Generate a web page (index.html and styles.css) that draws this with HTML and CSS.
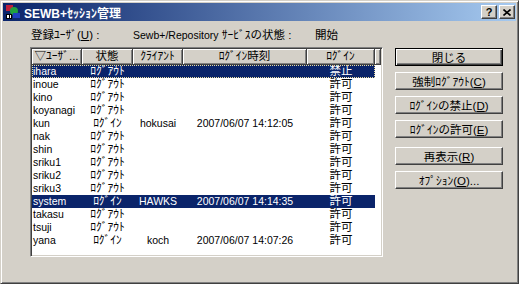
FILE: index.html
```html
<!DOCTYPE html>
<html lang="ja">
<head>
  <meta charset="UTF-8" />
  <title>SEWB+ｾｯｼｮﾝ管理</title>
  <link rel="stylesheet" href="styles.css">
</head>
<body>
  <div class="window">
    <div class="titlebar">
      <svg class="app-icon" viewBox="0 0 16 16" width="16" height="16">
        <rect x="1" y="1" width="7" height="6" fill="#c0203a"/>
        <circle cx="9" cy="7" r="4" fill="#20a040"/>
        <rect x="8" y="9" width="7" height="5" fill="#2040c0"/>
        <rect x="1" y="10" width="6" height="5" fill="#000"/>
        <rect x="2" y="11" width="2" height="3" fill="#fff"/>
        <rect x="5" y="11" width="1" height="3" fill="#fff"/>
      </svg>
      <span class="title">SEWB+ｾｯｼｮﾝ管理</span>
      <div class="caption-btns">
        <span class="cap-btn help">?</span>
        <span class="cap-btn">
          <svg viewBox="0 0 8 7" width="8" height="7">
            <path d="M0.5 0.5 L7.5 6.5 M7.5 0.5 L0.5 6.5" stroke="#000" stroke-width="1.6"/>
          </svg>
        </span>
      </div>
    </div>

    <div class="dialog">
      <div class="status-line">
        <span class="lbl-user">登録ﾕｰｻﾞ(<u>U</u>) :</span>
        <span class="lbl-service"><span class="latin">Sewb+/Repository</span> ｻｰﾋﾞｽの状態 :</span>
        <span>開始</span>
      </div>

      <div class="main">
        <!-- session list -->
        <div class="listview">
          <div class="lv-header">
            <span>▽ﾕｰｻﾞ...</span>
            <span>状態</span>
            <span>ｸﾗｲｱﾝﾄ</span>
            <span>ﾛｸﾞｲﾝ時刻</span>
            <span>ﾛｸﾞｲﾝ</span>
            <span></span>
          </div>
          <div class="lv-row selected focus"><span>ihara</span><span>ﾛｸﾞｱｳﾄ</span><span></span><span></span><span>禁止</span></div>
          <div class="lv-row"><span>inoue</span><span>ﾛｸﾞｱｳﾄ</span><span></span><span></span><span>許可</span></div>
          <div class="lv-row"><span>kino</span><span>ﾛｸﾞｱｳﾄ</span><span></span><span></span><span>許可</span></div>
          <div class="lv-row"><span>koyanagi</span><span>ﾛｸﾞｱｳﾄ</span><span></span><span></span><span>許可</span></div>
          <div class="lv-row"><span>kun</span><span>ﾛｸﾞｲﾝ</span><span>hokusai</span><span>2007/06/07 14:12:05</span><span>許可</span></div>
          <div class="lv-row"><span>nak</span><span>ﾛｸﾞｱｳﾄ</span><span></span><span></span><span>許可</span></div>
          <div class="lv-row"><span>shin</span><span>ﾛｸﾞｱｳﾄ</span><span></span><span></span><span>許可</span></div>
          <div class="lv-row"><span>sriku1</span><span>ﾛｸﾞｱｳﾄ</span><span></span><span></span><span>許可</span></div>
          <div class="lv-row"><span>sriku2</span><span>ﾛｸﾞｱｳﾄ</span><span></span><span></span><span>許可</span></div>
          <div class="lv-row"><span>sriku3</span><span>ﾛｸﾞｱｳﾄ</span><span></span><span></span><span>許可</span></div>
          <div class="lv-row selected"><span>system</span><span>ﾛｸﾞｲﾝ</span><span>HAWKS</span><span>2007/06/07 14:14:35</span><span>許可</span></div>
          <div class="lv-row"><span>takasu</span><span>ﾛｸﾞｱｳﾄ</span><span></span><span></span><span>許可</span></div>
          <div class="lv-row"><span>tsuji</span><span>ﾛｸﾞｱｳﾄ</span><span></span><span></span><span>許可</span></div>
          <div class="lv-row"><span>yana</span><span>ﾛｸﾞｲﾝ</span><span>koch</span><span>2007/06/07 14:07:26</span><span>許可</span></div>
        </div>

        <!-- command buttons -->
        <div class="buttons">
          <button type="button" class="btn default">閉じる</button>
          <button type="button" class="btn">強制ﾛｸﾞｱｳﾄ(<u>C</u>)</button>
          <button type="button" class="btn">ﾛｸﾞｲﾝの禁止(<u>D</u>)</button>
          <button type="button" class="btn">ﾛｸﾞｲﾝの許可(<u>E</u>)</button>
          <button type="button" class="btn spaced">再表示(<u>R</u>)</button>
          <button type="button" class="btn">ｵﾌﾟｼｮﾝ(<u>O</u>)...</button>
        </div>
      </div>
    </div>
  </div>
</body>
</html>
```

FILE: styles.css
```css
* {
  box-sizing: border-box;
}

html {
  background: #fff;
}

body {
  margin: 0;
  font-family: "Liberation Sans", "Noto Sans CJK JP", sans-serif;
  font-size: 11.5px;
  color: #000;
}

.latin {
  font-size: 10.5px;
}

.window {
  width: 519px;
  height: 284px;
  background: #d4d0c8;
  border: 1px solid;
  border-color: #d4d0c8 #404040 #404040 #d4d0c8;
  box-shadow: inset 1px 1px #fff, inset -1px -1px #808080;
  padding: 2px;
}

.titlebar {
  height: 18px;
  display: flex;
  align-items: center;
  padding: 0 1px 0 2px;
  background: linear-gradient(to right, #0a246a, #a6caf0);
  color: #fff;
}

.app-icon {
  margin-right: 3px;
  flex-shrink: 0;
}

.title {
  font-weight: bold;
  font-size: 12px;
  white-space: nowrap;
}

.caption-btns {
  margin-left: auto;
  display: flex;
  gap: 2px;
}

.cap-btn {
  width: 16px;
  height: 14px;
  display: flex;
  align-items: center;
  justify-content: center;
  background: #d4d0c8;
  border: 1px solid;
  border-color: #fff #404040 #404040 #fff;
  box-shadow: inset -1px -1px #808080;
  color: #000;
}

.cap-btn.help {
  font-weight: bold;
  font-size: 11px;
  line-height: 12px;
}

.dialog {
  padding: 7px 0 0 27px;
}

.status-line {
  display: flex;
  height: 14px;
  line-height: 14px;
  margin-bottom: 5px;
  padding-left: 1px;
  white-space: nowrap;
}

.lbl-user {
  width: 102px;
}

.lbl-service {
  width: 182px;
}

.main {
  display: flex;
  align-items: flex-start;
}

.listview {
  width: 353px;
  height: 210px;
  padding: 1px;
  background: #fff;
  border: 1px solid;
  border-color: #808080 #fff #fff #808080;
  box-shadow: inset 1px 1px #404040, inset -1px -1px #d4d0c8;
  overflow: hidden;
}

.lv-header {
  display: grid;
  grid-template-columns: 50px 51px 50px 124px 68px 1fr;
  height: 16px;
}

.lv-header span {
  background: #d4d0c8;
  border-right: 1px solid #404040;
  border-bottom: 1px solid #404040;
  box-shadow: inset 1px 1px #fff, inset -1px -1px #808080;
  text-align: center;
  line-height: 15px;
  white-space: nowrap;
  overflow: hidden;
}

.lv-row {
  display: grid;
  grid-template-columns: 50px 51px 50px 124px 68px;
  width: 343px;
  height: 13px;
  line-height: 13px;
}

.lv-row span {
  text-align: center;
  white-space: nowrap;
  overflow: hidden;
}

/* user, client and time columns are latin text */
.lv-row span:nth-child(1),
.lv-row span:nth-child(3),
.lv-row span:nth-child(4) {
  font-size: 10.5px;
}

.lv-row span:first-child {
  text-align: left;
  padding-left: 1px;
}

.lv-row.selected {
  background: #0a246a;
  color: #fff;
}

.lv-row.focus {
  outline: 1px dotted #e8dca0;
  outline-offset: -1px;
}

.buttons {
  width: 108px;
  margin: 1px 0 0 12px;
  display: flex;
  flex-direction: column;
  gap: 6px;
}

.btn {
  height: 18px;
  padding: 0;
  font: inherit;
  color: #000;
  background: #d4d0c8;
  border: 1px solid;
  border-color: #fff #404040 #404040 #fff;
  box-shadow: inset -1px -1px #808080;
  white-space: nowrap;
}

.btn.default {
  border-color: #000;
  box-shadow: inset 1px 1px #fff, inset -1px -1px #404040, inset -2px -2px #808080;
}

.btn.spaced {
  margin-top: 3px;
}
```
